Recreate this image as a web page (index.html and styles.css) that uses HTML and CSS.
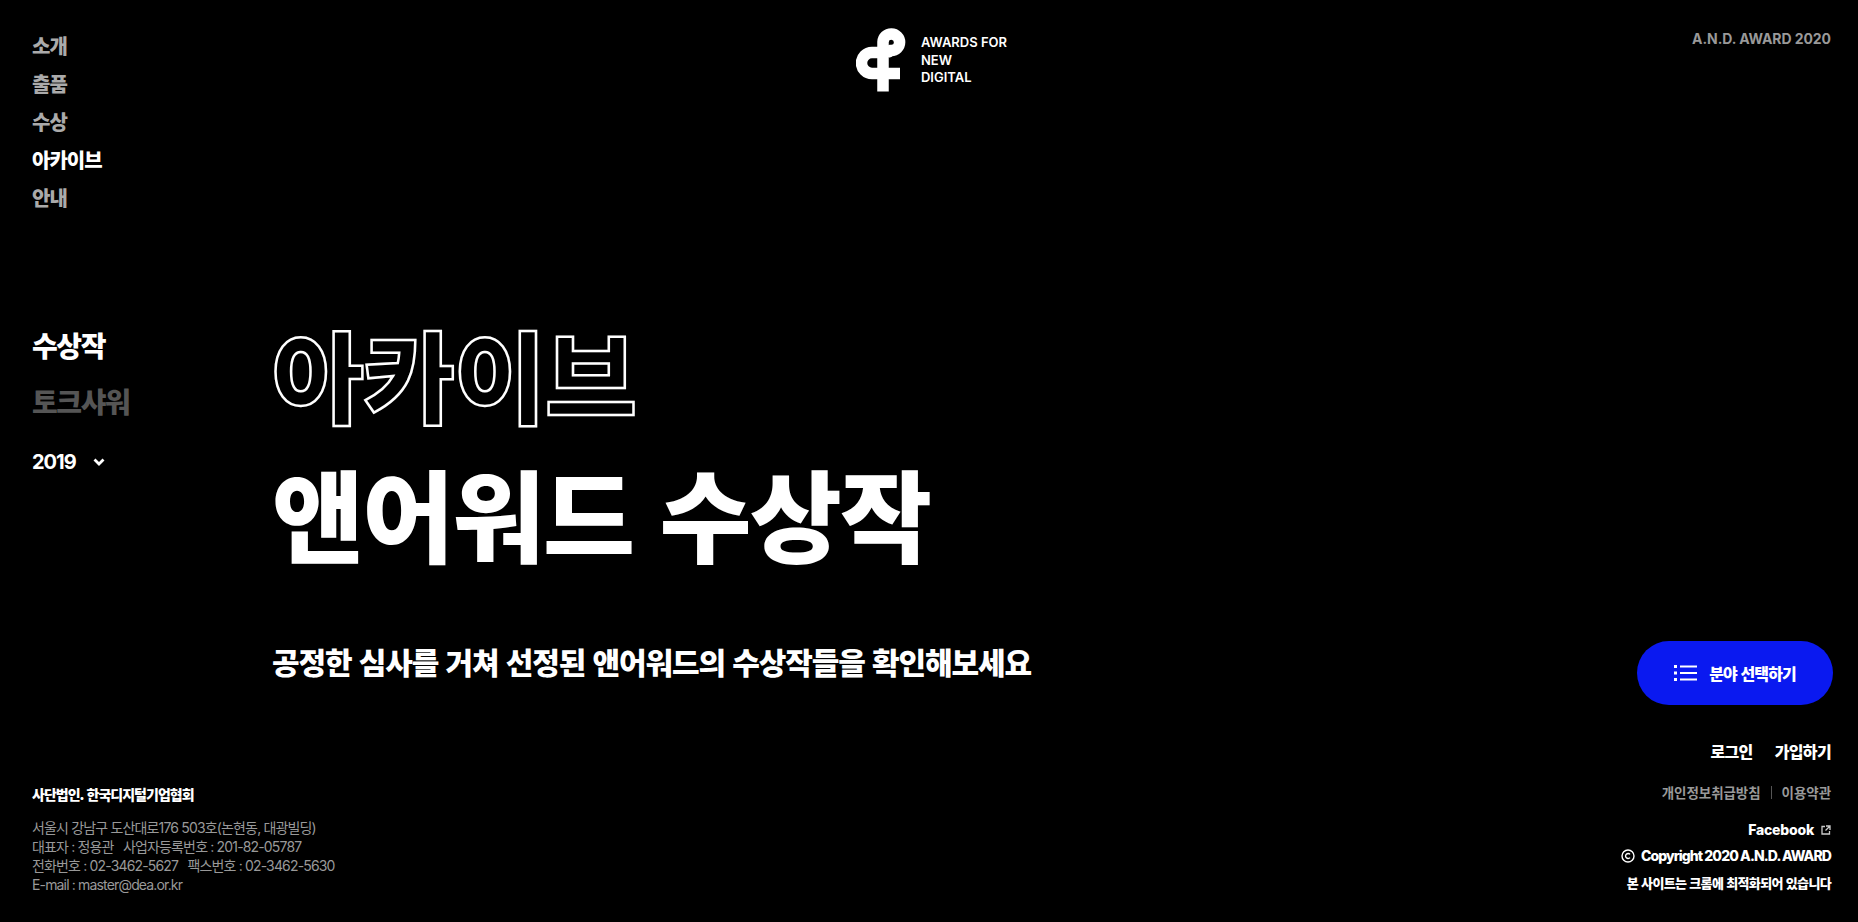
FILE: index.html
```html
<html lang="ko">
<head>
  <meta charset="UTF-8">
  <meta name="viewport" content="width=device-width, initial-scale=1.0">
  <title>A.N.D. AWARD 2020</title>
  <link rel="stylesheet" href="styles.css">
</head>
<body>
  <div class="page">
    <header class="top">
      <nav class="gnb">
        <a href="#">소개</a>
        <a href="#">출품</a>
        <a href="#">수상</a>
        <a href="#" class="on">아카이브</a>
        <a href="#">안내</a>
      </nav>
      <div class="logo">
        <svg class="logo-mark" width="50" height="65" viewBox="6 7 50 65">
          <path d="M33 71.500V22A8.300 8.300 0 1 1 41.300 30.500C40 31.500 39 32.500 37 32.500H22A10.500 10.500 0 0 0 22 53.500H50" fill="none" stroke="#fff" stroke-width="11.500"/>
        </svg>
        <div class="logo-text">AWARDS FOR<br>NEW<br>DIGITAL</div>
      </div>
      <div class="edition">A.N.D. AWARD 2020</div>
    </header>

    <main class="main">
      <aside class="side">
        <a href="#" class="side-link on">수상작</a>
        <a href="#" class="side-link">토크샤워</a>
        <div class="year">2019
          <svg width="12" height="8" viewBox="0 0 12 8"><path d="M1.500 1.500L6 6L10.500 1.500" fill="none" stroke="#fff" stroke-width="2.800"/></svg>
        </div>
      </aside>
      <section class="title">
        <h1><span class="outline">아카이브</span><br>앤어워드 수상작</h1>
        <p>공정한 심사를 거쳐 선정된 앤어워드의 수상작들을 확인해보세요</p>
      </section>
      <button class="pick" type="button">
        <svg width="23" height="16" viewBox="0 0 23 16" fill="#fff">
          <rect x="0" y="0" width="3" height="3"/><rect x="0" y="6.500" width="3" height="3"/><rect x="0" y="13" width="3" height="3"/>
          <rect x="6" y="0.500" width="17" height="2"/><rect x="6" y="7" width="17" height="2"/><rect x="6" y="13.500" width="17" height="2"/>
        </svg>
        분야 선택하기
      </button>
    </main>

    <footer class="foot">
      <div class="foot-left">
        <strong>사단법인. 한국디지털기업협회</strong>
        <p>서울시 강남구 도산대로176 503호(논현동, 대광빌딩)<br>
        대표자 : 정용관 &nbsp; 사업자등록번호 : 201-82-05787<br>
        전화번호 : 02-3462-5627 &nbsp; 팩스번호 : 02-3462-5630<br>
        E-mail : master@dea.or.kr</p>
      </div>
      <div class="foot-right">
        <div class="member"><a href="#">로그인</a><a href="#">가입하기</a></div>
        <div class="policy"><a href="#">개인정보취급방침</a><i></i><a href="#">이용약관</a></div>
        <a href="#" class="fb">Facebook
          <svg width="10" height="10" viewBox="0 0 10 10" fill="none" stroke="#ccc" stroke-width="1.300"><path d="M4 1.500H1V9H8.500V6M5 1H9V5M9 1L4.500 5.500"/></svg>
        </a>
        <div class="copy">
          <svg width="14" height="14" viewBox="0 0 14 14" fill="none" stroke="#fff" stroke-width="1.400"><circle cx="7" cy="7" r="6"/><path d="M9 5.400A2.500 2.500 0 1 0 9 8.600"/></svg>
          Copyright 2020 A.N.D. AWARD
        </div>
        <div class="chrome">본 사이트는 크롬에 최적화되어 있습니다</div>
      </div>
    </footer>
  </div>
</body>
</html>
```

FILE: styles.css
```css
* {
  box-sizing: border-box;
}

html, body {
  margin: 0;
  padding: 0;
  background: #000;
}

body {
  font-family: "Noto Sans CJK KR", Inter, sans-serif;
  color: #fff;
  overflow: hidden;
}

a {
  color: inherit;
  text-decoration: none;
}

.page {
  height: 922px;
  padding: 27px 27px 0 32px;
  display: flex;
  flex-direction: column;
}

.top {
  display: grid;
  grid-template-columns: 1fr auto 1fr;
  height: 276px;
}

.gnb {
  display: flex;
  flex-direction: column;
  align-items: flex-start;
  font-size: 20px;
  font-weight: 900;
  line-height: 38px;
  letter-spacing: -0.05em;
  color: #aaa;
}

.gnb .on {
  color: #fff;
}

.logo {
  display: flex;
  gap: 15px;
  align-self: start;
}

.logo-mark {
  flex: none;
}

.logo-text {
  font-family: Inter, sans-serif;
  font-size: 13px;
  font-weight: 600;
  line-height: 17.500px;
  padding-top: 7px;
}

.edition {
  padding-top: 3px;
  text-align: right;
  font-family: Inter, sans-serif;
  font-size: 14px;
  font-weight: 700;
  letter-spacing: -0.005em;
  color: #999;
}

.main {
  display: flex;
  height: 436px;
}

.side {
  width: 240px;
  flex: none;
  display: flex;
  flex-direction: column;
  align-items: flex-start;
  padding-top: 14px;
}

.side-link {
  font-size: 28px;
  font-weight: 900;
  line-height: 56px;
  letter-spacing: -0.05em;
  color: #555;
}

.side-link.on {
  color: #fff;
}

.year {
  display: flex;
  align-items: center;
  gap: 17px;
  margin-top: 21px;
  font-family: Inter, sans-serif;
  font-size: 20px;
  font-weight: 700;
  letter-spacing: -0.05em;
}

.title {
  flex: 1;
}

h1 {
  margin: 0;
  font-size: 100px;
  font-weight: 900;
  line-height: 139px;
  letter-spacing: -0.017em;
}

.outline {
  color: #000;
  letter-spacing: -0.01em;
  -webkit-text-stroke: 2.500px #fff;
}

.title p {
  margin: 58px 0 0;
  font-size: 30px;
  font-weight: 900;
  line-height: 44px;
  letter-spacing: -0.037em;
}

.pick {
  align-self: flex-end;
  flex: none;
  display: flex;
  align-items: center;
  justify-content: center;
  gap: 12px;
  width: 196px;
  height: 64px;
  margin: 0 -2px 34px 0;
  border: none;
  border-radius: 32px;
  background: #0a19f0;
  color: #fff;
  font-family: inherit;
  font-size: 16px;
  font-weight: 900;
  letter-spacing: -0.055em;
}

.foot {
  display: flex;
  justify-content: space-between;
}

.foot-left {
  padding-top: 45px;
}

.foot-left strong {
  display: block;
  font-size: 14px;
  font-weight: 900;
  line-height: 20px;
  letter-spacing: -0.07em;
}

.foot-left p {
  margin: 14px 0 0;
  font-family: Inter, "Noto Sans CJK KR", sans-serif;
  font-size: 14px;
  line-height: 19px;
  letter-spacing: -0.06em;
  color: #999;
}

.foot-right {
  display: flex;
  flex-direction: column;
  align-items: flex-end;
}

.member {
  display: flex;
  gap: 22px;
  font-size: 16px;
  font-weight: 900;
  line-height: 24px;
  letter-spacing: -0.04em;
}

.policy {
  display: flex;
  align-items: center;
  gap: 10px;
  margin-top: 19px;
  font-size: 13.500px;
  font-weight: 700;
  line-height: 20px;
  letter-spacing: -0.005em;
  color: #999;
}

.policy i {
  width: 1px;
  height: 13px;
  background: #555;
}

.fb {
  display: flex;
  align-items: center;
  gap: 7px;
  margin-top: 17px;
  font-family: Inter, sans-serif;
  font-size: 14px;
  font-weight: 800;
  line-height: 22px;
  letter-spacing: -0.015em;
}

.copy {
  display: flex;
  align-items: center;
  gap: 6px;
  margin-top: 4px;
  font-family: Inter, sans-serif;
  font-size: 14px;
  font-weight: 800;
  line-height: 22px;
  letter-spacing: -0.065em;
}

.chrome {
  margin-top: 5px;
  font-size: 13px;
  font-weight: 900;
  line-height: 22px;
  letter-spacing: -0.05em;
}
```
